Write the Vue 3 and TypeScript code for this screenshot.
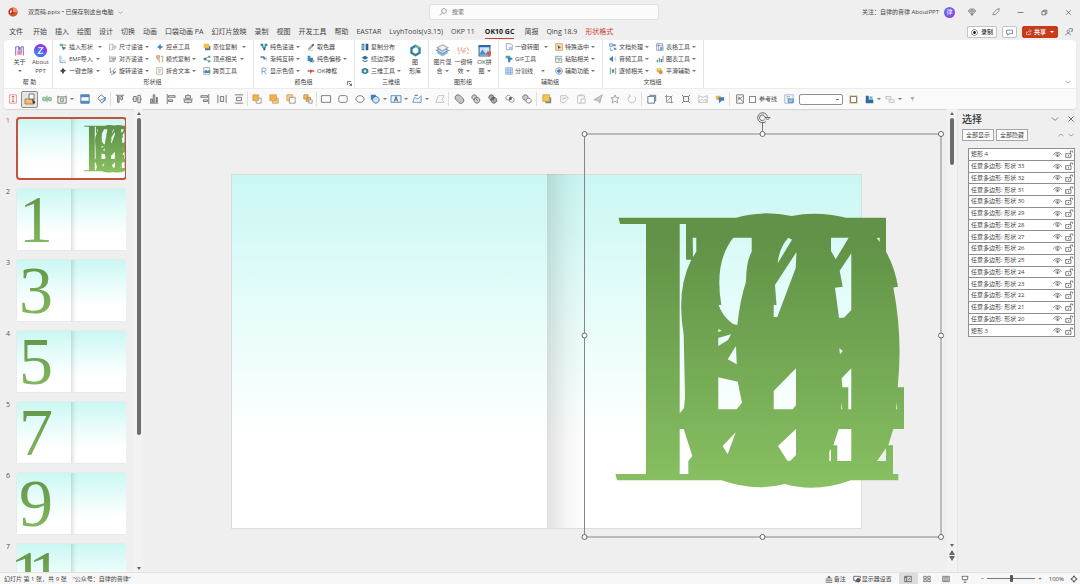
<script setup lang="ts">
import { h, ref } from 'vue'

type Shape = [d: string, fill?: string, stroke?: string]

const K = '#666'
const B = '#3c80ba'
const L = '#a9c8e6'
const O = '#efb04c'
const G = '#b9b9b9'
const D = '#8a8a8a'

const icons: Record<string, Shape[]> = {
  // ribbon, small
  insertShape: [['M1 1h5v4H1z', '#7fb08a'], ['M4 5l7 2-5 4z', B], ['M6 3h5', '', K]],
  emf: [['M1.500 1v10h9', '', B], ['M4 2v6h6', '', L]],
  clean: [['M6 1l2 3 3 1-3 2-2 4-2-4-3-1 3-2z', '#444']],
  size: [['M1 1v10M3 2h3v8H3M8 3l3 3-3 4', '', D], ['M5 5h4v3H5z', L]],
  align: [['M1 1v10M2 3h8v2H2M2 8h6v2H2', '', D], ['M5 5h5v2H5z', '#7a9cc0']],
  rotate: [['M2 1v8l8-7M3 11c4 0 6-2 7-5', '', K], ['M6 6l4 2-3 3z', B]],
  point: [['M6 1l1.500 3.500L11 6 7.500 7.500 6 11 4.500 7.500 1 6l3.500-1.500z', B]],
  style: [['M1 1h4v4H1zM7 2h3v9M2 7h3v4', '', '#9b7b4a'], ['M1 1h4v3H1z', O]],
  split: [['M1 1h9v10H1zM3 4h5M3 6h5M3 8h3', '', '#a59a86']],
  dup: [['M3 4h8v7H3z', '#5c7391'], ['M1 1h8v7H1z', '#f0c24b']],
  vertex: [['M9 2L3 6l6 4', '', K], ['M1 4h4v4H1z', B], ['M8 1h3v3H8zM8 8h3v3H8z', '#3d9a83']],
  cross: [['M1 1h9v10H1z', '#fff', D], ['M2 6l3-2 4 5H2z', B], ['M7 5h4v4H7z', '#53a074']],
  solid: [['M1 1h4v4H1zM7 1h4v4H7z', B], ['M3 5h6v3H3z', '#5aa7a0'], ['M5 7h3v4H5z', '#2c5f93']],
  grad: [['M1 2h5l4 4-4 1-2-3-3 1z', '#5a86b4'], ['M6 8l4-4v6', '', L]],
  rgb: [['M3 11V1.500h4q2 0 2 2.500T7 6.500H3M6 6.500L9.500 11', '', B]],
  picker: [['M2 9l5-6 2 2-6 5z', L, B], ['M7 3l2-2 2 2-2 2z', '#4a4a4a'], ['M1 11h9', '', O]],
  shift: [['M1 1h4v8H1z', '#3d8fa8'], ['M4 4h5v7H4z', B], ['M8 7h3v4H8z', '#7dbb9b']],
  okbox: [['M1 5h10v2H1z', '#d2553c'], ['M5 3l3 3-3 5z', '#c44']],
  distribute: [['M1 1h4v10H1z', '#3d8088'], ['M7 1h4v10H7z', '#2b5d92'], ['M3 3v6', '', '#fff']],
  drift: [['M6 1l5 3-5 3-5-3z', '#2b69a8'], ['M2 7l4 2 4-2v2l-4 2-4-2z', '#4b83ba']],
  cube: [['M6 1l5 2.500v5L6 11 1 8.500v-5z', '#3a7f9c'], ['M6 3.500L8.500 6 6 9 3.500 6z', '#cfe6ee']],
  toImg: [['M2 1h7l2 2v7H2z', '#f6f9fc', '#7790aa'], ['M6 6h5v4H6z', L]],
  gif: [['M1 1h7v4H1z', '#5aa08f'], ['M4 4h7v3H8v4H5z', B]],
  grid: [['M1 1h10v10H1zM1 4.500h10M1 8h10M4.500 1v10M8 1v10', '#e6effa', '#6a9ad2']],
  pick: [['M1 1h10v10H1z', '#f7e2b6', '#b88a3a'], ['M4 3l5 4-3 1-1 2z', '#556']],
  paste: [['M1 2h10M1 5h9M1 2v9h9V5', '', '#5c7c6d'], ['M4 6h4v3H4z', '#9fc5ab']],
  assist: [['M6 1a5 5 0 1 0 .1 0z', '#dde8f5', '#60799a'], ['M5 3h2v6H5zM3 5h6v2H3z', '#4b78ae']],
  doc: [['M1 1h4v4H1zM2 7v4h4', '#e8f0f8', B], ['M6 2h4v3H6zM7 7h4v3H7z', '#6a8fb8']],
  audio: [['M1 4h2l3-3v10L3 8H1z', B], ['M8 4v4M10 2v8', '', L]],
  frame: [['M2 1v10M10 1v10M5 3v6M7 3v6', '', '#466'], ['M5 4h2v4H5z', '#4b83ba']],
  sheet: [['M1 1h9v10H1zM1 4h9M4 1v10', '#fff', '#667d99'], ['M6 6h5v5H6z', '#81aad4']],
  chart: [['M1 7h2v4H1zM4 4h2v7H4z', '#66a58a'], ['M7 6h2v5H7z', B], ['M10 1h1v10h-1z', '#557']],
  morph: [['M1 2h7v6H1z', O], ['M7 5a3 3 0 1 0 .1 0z', '#c9962f'], ['M3 4h3', '', '#fff']],
  // ribbon, large
  about: [['M2.500 2.500h3v7M2.500 2.500v8M7.500 2.500h2v8M7.500 2.500v6', '', '#8a74c0'], ['M4 6h4v4H4z', '#e08ab5'], ['M5 3h2v2H5z', '#5576c7']],
  aboutPpt: [['M6 0a6 6 0 1 0 .1 0z', '#8b3df0'], ['M0 6a6 6 0 0 0 6 6L11 9 5 4z', '#3c7bf2'], ['M4 3.500h4L4 8.500h4.500', '', '#fff']],
  hex: [['M6 .5l4.800 2.700v5.600L6 11.500 1.200 8.800V3.200z', '#2e84a0'], ['M6 .5l4.800 2.700L8 4.500 6 3.500z', '#6fb58f'], ['M6 3l2.600 1.500v3L6 9 3.400 7.500v-3z', '#fff']],
  blend: [['M6 5l5.500 3L6 11.500.500 8z', '#8db9e6'], ['M6 3l5.500 3L6 9 .500 6z', '#c6d9ee', '#7794b5'], ['M6 .700l5 2.800-5 2.800-5-2.800z', '#f2f5f8', '#9aaabc']],
  fx: [['M1 3v3l2 1M4 3v3M6 5l2-1M9 3l2 3M1 8.500h2M5 8h2M9 8.500h2', '', '#e8ad9d'], ['M4 6h4v1H4z', '#e08c78']],
  puzzle: [['M1 2h10v9H1z', '#cfe3f7', '#35689e'], ['M.500 1h11v2H.500z', '#2c67a8'], ['M1 10l3-5 3 4 2-2 2 3z', '#4f8ac6'], ['M8 7h4v3l-2 2z', '#dc5a3e']],
  // quick toolbar
  qText: [['M2 1h8v10H2z', '#fff', '#d88'], ['M4.500 3h3M6 3v6M4.500 9h3', '', '#c55']],
  qSel: [['M1 6h9v5H1z', '#f3bd74', '#a8875b'], ['M5 1h5v5H5z', '#fff', '#678'], ['M8 6l3.500 3.500-2.500 1.500z', '#333']],
  qMid: [['M0 6h12M6 2v8', '', '#5b9c6a'], ['M1 4h4v4H1zM8 4h3v4H8z', '#b7d8bd', '#7bb288']],
  qFit: [['M1 2v9h10V2M1 3.500h10', '', K], ['M4 5h4v4H4z', '#bcd5bf', '#7aa282']],
  qRow: [['M1 1h10v10H1z', '#fff', '#33628f'], ['M1 1h10v3H1zM1 8h10v3H1z', '#4d8abf']],
  qFlip: [['M1 5l4-4 5 4-4 6z', '#fff', K], ['M3 8l8-4M7 10l4-4', '', B]],
  alT: [['M1 1.500h10', '', K], ['M3 3h2v7H3z', G, K], ['M7 3h2v4H7z', '#fff', K]],
  alM: [['M0 6h12', '', K], ['M2 3h3v6H2zM7 1.500h3v9H7z', '#eee', K]],
  alB: [['M1 11h10', '', K], ['M2 6h2v4H2zM5 1h2v9H5zM9 4h1v6H9z', '#ccd', K]],
  alL: [['M1.500 0v12', '', K], ['M3 2h8v2H3zM3 7h5v2H3z', '#eee', K]],
  alC: [['M0 6h12M6 0v12', '', D], ['M3 2h6v3H3zM1.500 7h9v3h-9z', '#eee', K]],
  alR: [['M10.500 0v12', '', K], ['M1 2h8v2H1zM4 7h5v2H4z', '#eee', K]],
  dsH: [['M1 1v10M11 1v10', '', K], ['M4 3h4v6H4z', '#eee', K]],
  dsV: [['M1 1h10M1 11h10', '', K], ['M3 4h6v4H3z', '#eee', K]],
  fwd: [['M5 5h6v6H5z', '#fff', D], ['M1 1h7v7H1z', '#f2b04e', '#d8a253']],
  front: [['M4 5h7v6H4z', '#f7cf8b', '#c5a066'], ['M1 1h8v7H1z', '#f2b04e', '#d8a253']],
  back: [['M1 1h7v7H1z', '#f7cf8b', '#d8a253'], ['M4 4h7v7H4z', '#fff', '#987']],
  bwd: [['M1 1h5v5H1zM4 4h5v5H4z', '#f4bd6b', '#b98a45'], ['M7 7h4v4H7z', '#fff', '#987']],
  rect: [['M.500 2h11v8H.500z', '#fff', K]],
  rrect: [['M3 2h6q2 0 2 2v4q0 2-2 2H3q-2 0-2-2V4q0-2 2-2z', '#fff', K]],
  oval: [['M6 2c3 0 5 2 5 4s-2 4-5 4-5-2-5-4 2-4 5-4z', '#fff', K]],
  shapes: [['M1 1h6v6H1z', '#3d82bf'], ['M7 3a4 4 0 1 0 .1 0z', '#cfe1f2', '#2d6aa5']],
  tbox: [['M0 2h12v8H0z', '#e9f2fb', '#4682bd'], ['M4 9l2-6 2 6M5 7h2', '', '#345']],
  edit: [['M1 10l2-6 4 2 4-4v8z', '#eef5fb', '#5f93c6'], ['M3 1h4v1H3z', K]],
  curve: [['M1 10l3-8h7l-3 5 3 3z', '', G]],
  union: [['M4.500 1A3.500 3.500 0 0 0 3 7.500L6 10.500A3.500 3.500 0 0 0 10.500 5L7.500 2Q6 1 4.500 1z', '#c4c4c4', K]],
  comb: [['M4 1a3 3 0 1 0 .1 0z', '#ccc', K], ['M7 4a3.500 3.500 0 1 0 .1 0z', '#ccc', K], ['M5 5l3 3', '', K]],
  frag: [['M4 1a3 3 0 1 0 .1 0zM7 4a3.500 3.500 0 1 0 .1 0z', '#aaa', '#555'], ['M4 5h4M6 4v4', '', '#555']],
  inter: [['M4 1.500a3 3 0 1 0 .1 0zM8 4a3 3 0 1 0 .1 0z', '', D], ['M5 4h3v3H5z', '#555']],
  subt: [['M4 1a3.200 3.200 0 1 0 .1 0z', '#ccc', K], ['M8 5a3 3 0 1 0 .1 0z', '#fff', K]],
  copy: [['M4 4h7v7H4z', '#6f8f74'], ['M1 1h8v8H1z', '#f0c55a', '#c9a040']],
  brush: [['M2 2h7l2 3-5 6-4-2zM4 5h4M4 7l5-3', '', G]],
  clip: [['M2 2h8v3M2 2v9h4M6 6h5v5H6zM4 1h4', '', G]],
  plane: [['M1 7l10-6-3 10-2-3z', '#ccc', '#aaa']],
  star: [['M6 1l1.500 3.500H11L8.300 6.800 9.500 11 6 8.500 2.500 11l1.200-4.200L1 4.500h3.500z', '', '#999']],
  spin: [['M4 2a4.500 4.500 0 1 0 5 1M2 1l2 1-1 2', '', G]],
  win: [['M1 3h8v8H1z', '#fff', '#567'], ['M3 1h8v8h-2V3H3z', '#7f95ad']],
  crop: [['M3 1v9h8M1 3h8v8M4 8l6-6', '', D]],
  fitp: [['M3 3h6v6H3zM1 1l2 2M11 1L9 3M1 11l2-2M11 11L9 9', '', K]],
  pic: [['M1 2l5 2 5-2v8H1zM1 10l4-4 2 2 2-2 2 4', '', G]],
  flag: [['M1 2h6v5H1z', '#edb64b'], ['M4 4h7v4H8l-3 3z', '#3f7fb9']],
  note: [['M2 1h8v10H2z', '#fff', K], ['M3 8l6-5M4 3l5 6M3 5h3', '', K]],
  ruler: [['M1 1h10v10H1zM3 3h4M3 5h4', '#fff', '#8aaac8'], ['M5 6h6v4H5z', L, B]],
  fill: [['M1 1h10v10H1z', '', '#e4b45c'], ['M2 2h8v8H2z', '#fff', '#555']],
  bars: [['M1 1h4v5h6v5H1z', '#35689a'], ['M6 2h4v3H6z', '#5bb0c9']],
  link: [['M1 3h6v3H1zM5 7h6v3H5z', '', G]],
  pin: [['M4 2h4v3H4zM6 5v4', '#aaa', '#aaa']],
  // chrome
  ppt: [['M6 .500a5.500 5.500 0 1 0 .1 0z', '#d35230'], ['M6 .500a5.500 5.500 0 0 1 5.500 5.500H6z', '#f08f72'], ['M1 3.500h5v5H1z', '#a5311a'], ['M3 7.500v-3h1.300v1.700H3', '', '#fff']],
  search: [['M7.500 1a3.500 3.500 0 1 0 .1 0zM5 7.500L1.500 11', '', K]],
  diamond: [['M3 1.500h6l2.500 3L6 11 .500 4.500zM.500 4.500h11M4 4.500L6 11l2-6.500L6 1.500z', '', K]],
  pen: [['M2 8l5-6 4-1-1 4-5 5H1z', '', K]],
  min: [['M1 6h10', '', '#333']],
  max: [['M1.500 4h6v6h-6zM4 4V2h6v6H8', '', '#333']],
  close: [['M2 2l8 8M10 2l-8 8', '', '#333']],
  rec: [['M6 1a5 5 0 1 0 .1 0z', '', '#333'], ['M6 3.500a2.500 2.500 0 1 0 .1 0z', '#222']],
  comment: [['M1 2h10v6H5l-2 2.500V8H1z', '', '#444']],
  share: [['M1 5v6h8V8M3 8c0-3 2-4 5-4M7 1l4 3-4 3', '', '#fff']],
  person: [['M5 3a2 2 0 1 0 .1 0zM1 11c0-4 7-4 7 0M6 1h5v4H9', '', '#555']],
  down: [['M1 4l5 4 5-4', '', '#555']],
  up: [['M1 8l5-4 5 4', '', '#555']],
  eye: [['M.500 6.500C3 2 9 2 11.500 6.500M6 4.500a2.200 2.200 0 1 0 .1 0z', '', '#666'], ['M6 6a1 1 0 1 0 .1 0z', '#666']],
  lock: [['M1 5.500h8V11H1zM8 5.500V1.500h3.500V4', '', '#444'], ['M4.500 7.500h1v2h-1z', '#444']],
  notes: [['M1 6h10M1 8.500h10M1 11h10', '', '#444'], ['M6 1l3 3H3z', '#444']],
  display: [['M1 2h10v3M1 2v6h4M3 10h3', '', '#333'], ['M8 5a2.800 2.800 0 1 0 .1 0z', '#666', '#333']],
  vNormal: [['M1 2h10v8H1zM1 4h3M4 2v8M6 8l3-4', '', '#444']],
  vSorter: [['M1 2h4v3H1zM7 2h4v3H7zM1 7h4v3H1zM7 7h4v3H7z', '', '#555']],
  vRead: [['M1 2h10v8H1zM6 2v8M2 4h3M7 4h3M2 6h3M7 6h3M2 8h3M7 8h3', '', '#555']],
  vShow: [['M1 2h10M2 2v5h8V2M6 7v3M4 11h4', '', '#444']],
  fitWin: [['M6 .500L8 3H4zM6 11.500L8 9H4zM.500 6L3 4v4zM11.500 6L9 4v4z', '#555'], ['M3.500 3.500h5v5h-5z', '', '#555']],
}

const Ico = (p: { n: string }) =>
  h(
    'svg',
    { viewBox: '0 0 12 12', class: 'ico', 'aria-hidden': 'true' },
    (icons[p.n] ?? []).map(([d, fill, stroke]) => h('path', { d, fill: fill || 'none', stroke: stroke || 'none' })),
  )
Ico.props = ['n']

const tabs = ['文件', '开始', '插入', '绘图', '设计', '切换', '动画', '口袋动画 PA', '幻灯片放映', '录制', '视图', '开发工具', '帮助', 'EASTAR', 'LvyhTools(v3.15)', 'OKP 11', 'OK10 GC', '简报', 'Qing 18.9', '形状格式']

interface Cmd { i: string; t: string; a?: boolean }
interface Group { name: string; cols: { wide?: boolean; items: Cmd[] }[]; bigs: { i: string; l: string[]; a?: boolean }[]; launch?: boolean }

const c = (i: string, t: string, a = true): Cmd => ({ i, t, a })
const groups: Group[] = [
  { name: '帮 助', cols: [], bigs: [{ i: 'about', l: ['关于'], a: true }, { i: 'aboutPpt', l: ['About', 'PPT'] }] },
  {
    name: '形状组', bigs: [], cols: [
      { wide: true, items: [c('insertShape', '插入形状'), c('emf', 'EMF导入'), c('clean', '一键去除')] },
      { items: [c('size', '尺寸递进'), c('align', '对齐递进'), c('rotate', '旋转递进')] },
      { items: [c('point', '控点工具', false), c('style', '模式复制'), c('split', '拆合文本')] },
      { wide: true, items: [c('dup', '原位复制'), c('vertex', '顶点相关'), c('cross', '跨页工具', false)] },
    ],
  },
  {
    name: '颜色组', launch: true, bigs: [], cols: [
      { items: [c('solid', '纯色递进'), c('grad', '渐纯互转'), c('rgb', '显示色值')] },
      { items: [c('picker', '取色器', false), c('shift', '纯色偏移'), c('okbox', 'OK神框', false)] },
    ],
  },
  {
    name: '三维组', cols: [{ items: [c('distribute', '复制分布', false), c('drift', '绕边漂移', false), c('cube', '三维工具')] }],
    bigs: [{ i: 'hex', l: ['图', '形库'] }],
  },
  { name: '图形组', cols: [], bigs: [{ i: 'blend', l: ['图片混', '合'], a: true }, { i: 'fx', l: ['一键特', '效'], a: true }, { i: 'puzzle', l: ['OK拼', '图'], a: true }] },
  {
    name: '辅助组', bigs: [], cols: [
      { wide: true, items: [c('toImg', '一键转图'), c('gif', 'GIF工具', false), c('grid', '分割线')] },
      { items: [c('pick', '特殊选中'), c('paste', '粘贴相关'), c('assist', '辅助功能')] },
    ],
  },
  {
    name: '文档组', bigs: [], cols: [
      { items: [c('doc', '文档处理'), c('audio', '音频工具'), c('frame', '逐帧相关')] },
      { items: [c('sheet', '表格工具'), c('chart', '图表工具'), c('morph', '平滑辅助')] },
    ],
  },
]

// A trailing "+" marks a tool with a drop-down arrow.
const tools: string[][] = [
  ['qText', 'qSel', 'qMid', 'qFit+', 'qRow', 'qFlip'],
  ['alT', 'alM', 'alB', 'alL', 'alC', 'alR', 'dsH', 'dsV'],
  ['fwd', 'front', 'back', 'bwd'],
  ['rect', 'rrect', 'oval', 'shapes+', 'tbox+', 'edit+', 'curve'],
  ['union', 'comb', 'frag', 'inter', 'subt'],
  ['copy', 'brush', 'clip', 'plane', 'star', 'spin'],
  ['win', 'crop', 'fitp', 'pic', 'flag'],
]

const digits = ['', '1', '3', '5', '7', '9', '11']
const current = ref(0)
const zoom = ref(50)
const layers = ['矩形 4', ...Array.from({ length: 14 }, (_, k) => `任意多边形: 形状 ${33 - k}`), '矩形 3']

const art = [
  'M618.500 217.700H736Q762 210 791.700 216Q818 211 846 217.700H886V251.700Q895 268 898 286.700L893.300 287.500Q903 337 897.700 387.300H904V429H893.300L888.300 445.300H893V474H898.300V480.300H851Q816 493 785 484Q754 492 721.700 480.300H617L615.500 474H646V224H620Z',
  'M679.700 224H686V259.700H691.300Q676 290 683.700 335L685 397 684 408 679.700 413.300Z',
  'M692.700 237.700H696.300V251.700L693 257Z',
  'M733.300 237.700H751.700V251.700Q746 262 746 281.700Q740 300 737.300 325L733 324Q722 316 718.700 305H721.300Q714 262 733.300 237.700Z',
  'M788.300 237.700L792 239.700 777.700 263.300Q779 248 788.300 237.700Z',
  'M796.500 252L795.700 268 777.300 317H773.700V305H776.500L775 285Z',
  'M831 237.700H848.700L835.700 259.300 831 251Z',
  'M851.300 253.300V310L844 317.700H839L835 287.700 842.700 286.700 839.700 270.700Z',
  'M876.700 238L879.700 237.700V242Z',
  'M718.300 329L721.700 330.700 718.300 332Z',
  'M718.300 338L731 334.300 728 340 718.300 346Z',
  'M736 346L736.700 364.300 727.700 359.300Z',
  'M718.300 377.300L737.700 381.700 742 402.700 736.700 409.300H718.300Z',
  'M796 368.300V405L792.700 409.300H773.700V391Z',
  'M851.300 368.300V409.300H848.300V387.300H842.300L841.700 378.300Z',
  'M839.300 348.300L842.700 350.700 840 354.300Z',
  'M679.700 429H683.700L692.300 456 688.300 461V474H679.700Z',
  'M735.700 432.300L727.700 454.300 722.700 446Z',
  'M796 429V455L790 461 787.300 460.700 778 446Z',
  'M838.700 429H851.300V461H837.300V445.300H833.300Z',
  'M829.300 451.700L831 449V461H829.300Z',
  'M886 448.300V461H877Z',
  'M897 402V409.300H896Z',
  'M841.300 402L842.300 409.300H841.300Z',
].join('')

const handles = [[584.5, 134], [762.5, 134], [941, 134], [584.5, 335.5], [941, 335.5], [584.5, 537], [762.5, 537], [941, 537]]
</script>

<template>
  <div class="app">
    <header class="titlebar">
      <div class="doc"><Ico n="ppt" class="s10" /><span>双页码.pptx • 已保存到这台电脑</span><Ico n="down" class="s5" /></div>
      <label class="search"><Ico n="search" class="s8" /><input type="text" placeholder="搜索" aria-label="搜索" /></label>
      <div class="window">
        <span>关注：自律的音律 AboutPPT</span>
        <span class="avatar">律</span>
        <button v-for="n in ['diamond', 'pen', 'min', 'max', 'close']" :key="n" class="winbtn" :aria-label="n"><Ico :n="n" :class="n === 'diamond' || n === 'pen' ? 's8' : 's7'" /></button>
      </div>
    </header>

    <div class="tabrow">
      <nav class="tabs">
        <button v-for="t in tabs" :key="t" class="tab" :class="{ active: t === 'OK10 GC', context: t === '形状格式' }">{{ t }}</button>
      </nav>
      <div class="actions">
        <button class="act"><Ico n="rec" class="s7" />录制</button>
        <button class="act" aria-label="批注"><Ico n="comment" class="s7" /></button>
        <button class="act share"><Ico n="share" class="s6" />共享<i class="arrow"></i></button>
        <button class="person" aria-label="协作"><Ico n="person" class="s8" /></button>
      </div>
    </div>

    <section class="card">
      <div class="ribbon">
        <div v-for="g in groups" :key="g.name" class="group">
          <div class="cmds">
            <div v-for="(col, k) in g.cols" :key="k" class="col" :class="{ wide: col.wide }">
              <button v-for="it in col.items" :key="it.t" class="cmd">
                <Ico :n="it.i" class="s8" /><span class="cmdtext">{{ it.t }}</span><i v-if="it.a" class="arrow"></i>
              </button>
            </div>
            <button v-for="b in g.bigs" :key="b.i" class="big">
              <Ico :n="b.i" class="s13" />
              <span v-for="(l, k) in b.l" :key="l" class="bigline">{{ l }}<i v-if="b.a && k === 1" class="arrow"></i></span>
              <span v-if="b.a && b.l.length === 1" class="bigline"><i class="arrow"></i></span>
            </button>
          </div>
          <div class="gname">{{ g.name }}<svg v-if="g.launch" class="launch" viewBox="0 0 6 6"><path d="M.500 5V.500H5M2.500 2.500l3 3M5.500 3v2.500H3" fill="none" stroke="#555" /></svg></div>
        </div>
        <button class="collapse" aria-label="折叠功能区"><Ico n="down" class="s6" /></button>
      </div>

      <div class="quick">
        <div v-for="(set, k) in tools" :key="k" class="set">
          <button v-for="t in set" :key="t" class="tool" :class="{ on: t === 'qSel', drop: t.endsWith('+') }" :aria-label="t">
            <Ico :n="t.replace('+', '')" :class="t === 'qSel' ? 's12' : 's10'" /><i v-if="t.endsWith('+')" class="arrow"></i>
          </button>
        </div>
        <div class="set tail">
          <button class="tool" aria-label="注释"><Ico n="note" class="s10" /></button>
          <label class="check"><input type="checkbox" />参考线</label>
          <button class="tool" aria-label="标尺"><Ico n="ruler" class="s10" /></button>
          <select class="combo" aria-label="字号"><option></option></select>
          <button class="tool" aria-label="填充"><Ico n="fill" class="s9" /></button>
          <button class="tool drop" aria-label="图表"><Ico n="bars" class="s9" /><i class="arrow"></i></button>
          <button class="tool drop" aria-label="链接"><Ico n="link" class="s10" /><i class="arrow"></i></button>
          <button class="tool" aria-label="固定"><Ico n="pin" class="s7" /></button>
        </div>
      </div>
    </section>

    <main class="work">
      <ol class="thumbs">
        <li v-for="(d, k) in digits" :key="k" class="slide" :class="{ sel: current === k }">
          <span class="num">{{ k + 1 }}</span>
          <button class="thumb" :aria-label="`幻灯片 ${k + 1}`" @click="current = k">
            <svg viewBox="0 0 109 61" :class="{ open: d }">
              <rect width="109" height="61" fill="url(#sky)" />
              <rect x="54" width="6" height="61" fill="url(#spine)" />
              <path v-if="k === 0" :d="art" transform="translate(-40 -30) scale(.1733)" fill="url(#leaf)" fill-rule="evenodd" />
              <text v-else-if="d === '11'" x="-7 11" y="53" class="digit">11</text>
              <text v-else x="2" y="53" class="digit">{{ d }}</text>
            </svg>
          </button>
        </li>
      </ol>
      <div class="scroll left"><i class="tri"></i><i class="track"><i class="knob long"></i></i><i class="tri dn"></i></div>

      <div class="stage">
        <svg viewBox="143 109 804 463" class="canvas">
          <defs>
            <linearGradient id="sky" x1="0" y1="0" x2="0" y2="1"><stop offset="0" stop-color="#caf7f2" /><stop offset=".35" stop-color="#e4fcfa" /><stop offset=".75" stop-color="#fff" /></linearGradient>
            <linearGradient id="spine"><stop offset="0" stop-color="#333" stop-opacity=".15" /><stop offset=".5" stop-color="#333" stop-opacity=".05" /><stop offset="1" stop-color="#333" stop-opacity="0" /></linearGradient>
            <linearGradient id="leaf" x1="0" y1="0" x2="0" y2="1"><stop offset=".1" stop-color="#619247" /><stop offset="1" stop-color="#88c062" /></linearGradient>
          </defs>
          <rect x="231.500" y="174.500" width="630" height="354" fill="url(#sky)" stroke="#d5dfde" />
          <rect x="547" y="174" width="38" height="354" fill="url(#spine)" />
          <path :d="art" fill="url(#leaf)" fill-rule="evenodd" />
          <rect x="584.500" y="134" width="356.500" height="403" fill="none" stroke="#868686" />
          <path d="M762.500 131v-9" stroke="#777" />
          <circle v-for="([x, y], k) in handles" :key="k" :cx="x" :cy="y" r="2.500" fill="#fff" stroke="#666" />
          <path d="M766 121.500a5 5 0 1 1 1.500-5M765 117.500h5l-2.500 2.500zM764.500 119.500a2.800 2.800 0 1 1 .5-2.500" fill="none" stroke="#666" />
        </svg>
      </div>
      <div class="scroll right"><i class="tri"></i><i class="track"><i class="knob short"></i></i><i class="tri dn"></i><i class="tri step"></i><i class="tri step dn"></i></div>

      <aside class="pane">
        <div class="panehead"><h2>选择</h2><button aria-label="选项"><Ico n="down" class="s8" /></button><button aria-label="关闭"><Ico n="close" class="s8" /></button></div>
        <div class="panebar"><button class="box">全部显示</button><button class="box">全部隐藏</button><span class="grow"></span><button aria-label="上移"><Ico n="up" class="s6" /></button><button aria-label="下移"><Ico n="down" class="s6" /></button></div>
        <ul class="layers">
          <li v-for="l in layers" :key="l"><span class="grow">{{ l }}</span><button aria-label="可见"><Ico n="eye" class="s9" /></button><button aria-label="锁定"><Ico n="lock" class="s8" /></button></li>
        </ul>
      </aside>
    </main>

    <footer class="status">
      <span>幻灯片 第 1 张，共 9 张</span><span>“公众号：自律的音律”</span><span class="grow"></span>
      <button class="st"><Ico n="notes" class="s8" />备注</button>
      <button class="st"><Ico n="display" class="s8" />显示器设置</button>
      <div class="views"><button v-for="n in ['vNormal', 'vSorter', 'vRead', 'vShow']" :key="n" :class="{ on: n === 'vNormal' }" :aria-label="n"><Ico :n="n" class="s8" /></button></div>
      <div class="zoomer"><button aria-label="缩小">−</button><input v-model="zoom" type="range" min="0" max="100" aria-label="缩放" /><button aria-label="放大">+</button></div>
      <span>100%</span>
      <button aria-label="适应窗口"><Ico n="fitWin" class="s8" /></button>
    </footer>
  </div>
</template>

<style>
body { margin: 0; background: #efefef; }
</style>

<style scoped>
.app { height: 100vh; display: flex; flex-direction: column; overflow: hidden; background: #efefef; color: #444; font: 6px/8px "Open Sans", "Noto Sans CJK SC", sans-serif; }
button, input, select { font: inherit; color: inherit; margin: 0; padding: 0; border: 0; background: none; }
button { display: flex; align-items: center; justify-content: center; white-space: nowrap; }
.grow { flex: 1; }
.ico { display: block; flex: none; overflow: visible; }
.s5 { width: 5px; height: 5px; }
.s6 { width: 6px; height: 6px; }
.s7 { width: 7px; height: 7px; }
.s8 { width: 8px; height: 8px; }
.s9 { width: 9px; height: 9px; }
.s10 { width: 10px; height: 10px; }
.s12 { width: 12px; height: 12px; }
.s13 { width: 13px; height: 13px; }
.arrow { flex: none; width: 0; height: 0; border: 2px solid transparent; border-top-color: #777; border-bottom: 0; }

.titlebar { flex: none; height: 24px; display: grid; grid-template-columns: 1fr 230px 1fr; align-items: center; padding-left: 8px; }
.doc { display: flex; align-items: center; gap: 4px; }
.doc span { margin-left: 6px; }
.search { height: 16px; display: flex; align-items: center; gap: 5px; padding-left: 9px; background: #fbfbfb; border: 1px solid #e0e0e0; border-radius: 2px; box-sizing: border-box; }
.search input { flex: 1; min-width: 0; outline: 0; }
.search input::placeholder { color: #666; opacity: 1; }
.window { display: flex; align-items: center; justify-content: flex-end; }
.avatar { width: 11px; height: 11px; margin: 0 5px; border-radius: 50%; background: linear-gradient(135deg, #4b7cf3, #a234ee); color: #fff; text-align: center; line-height: 11px; }
.winbtn { width: 24px; height: 20px; }

.tabrow { flex: none; height: 16px; display: flex; justify-content: space-between; align-items: center; padding: 0 7px 0 9px; }
.tabs { display: flex; gap: 8px; font-size: 7px; }
.tab { height: 14px; border-bottom: 1px solid transparent; border-top: 1px solid transparent; box-sizing: border-box; }
.tab:first-child { margin-right: 2px; }
.tab.active { margin: 0 2px; font-weight: 700; color: #222; border-bottom-color: #c8442c; }
.tab.context { color: #c8442c; }
.actions { display: flex; gap: 5px; align-items: center; }
.act { height: 12px; padding: 0 3px; gap: 3px; background: #fff; border: 1px solid #c2c2c2; border-radius: 2px; box-sizing: border-box; color: #222; font-weight: 500; }
.share { gap: 2px; background: #c53b1b; border-color: #c53b1b; color: #fff; font-weight: 700; }
.share .arrow { border-top-color: #fff; margin-left: 2px; }
.person { margin-left: 2px; }

.card { flex: none; margin: 0 4px; background: #fff; border-radius: 4px; box-shadow: 0 1px 1px #d4d4d4; overflow: hidden; }
.ribbon { display: flex; height: 48px; }
.group { display: flex; flex-direction: column; padding: 1px 7px 0 6px; border-right: 1px solid #e4e4e4; box-sizing: border-box; }
.group:first-child { padding: 1px 5px 0 8px; }
.cmds { display: flex; gap: 7px; flex: 1; }
.cmds:has(.big + .big) { gap: 0; margin: 0 -4px 0 -3px; }
.cmds:has(.col + .big) { gap: 5px; margin-right: -3px; }
.col { width: 40px; display: flex; flex-direction: column; }
.col.wide { width: 43px; }
.cmd { height: 12px; gap: 2px; justify-content: flex-start; }
.cmd .arrow { margin-left: 1px; }
.col.wide .cmd:first-child .arrow { margin-left: 4px; }
.cmdtext { min-width: 23px; text-align: left; }
.big { width: 21px; flex-direction: column; justify-content: flex-start; padding-top: 3px; gap: 1px; }
.col + .big { width: 18px; }
.bigline { display: flex; align-items: center; gap: 2px; height: 8px; }
.gname { height: 10px; line-height: 9px; text-align: center; position: relative; }
.launch { position: absolute; right: -5px; top: 3px; width: 5px; height: 5px; }
.collapse { margin-left: auto; align-self: flex-end; padding: 0 5px 3px 0; }

.quick { display: flex; align-items: center; height: 21px; background: #fafafa; border-top: 1px solid #ececec; box-sizing: border-box; }
.set { display: flex; align-items: center; border-right: 1px solid #dedede; height: 14px; }
.set:nth-child(n + 5) { padding: 0 1px; }
.set.tail { border: 0; }
.tool { width: 17px; height: 17px; }
.tool.drop { width: 21px; gap: 3px; }
.tool.on { background: #e4e4e4; border: 1px solid #8d8d8d; border-radius: 2px; box-sizing: border-box; }
.check { display: flex; align-items: center; gap: 3px; margin: 0 3px 0 1px; }
.check input { appearance: none; width: 7px; height: 7px; border: 1px solid #888; background: #fff; box-sizing: border-box; }
.combo { width: 44px; height: 11px; margin: 0 2px; background: #fff linear-gradient(#777, #777) no-repeat right 3px center / 3px 1px; border: 1px solid #8f8f8f; border-radius: 2px; appearance: none; box-sizing: border-box; }

.work { flex: 1; min-height: 0; display: flex; }
.thumbs { margin: 0; padding: 9px 0 0 6px; list-style: none; display: flex; flex-direction: column; gap: 10px; width: 120px; overflow: hidden; }
.slide { flex: none; display: flex; }
.num { width: 11px; font-size: 7px; line-height: 6px; color: #555; }
.sel .num { color: #d0553f; }
.thumb { width: 109px; border-radius: 2px; box-shadow: 0 0 1px #bbb; }
.thumb svg { display: block; width: 100%; border-radius: 2px; }
.thumb .open { overflow: visible; }
.sel .thumb { outline: 2px solid #c4523d; outline-offset: -1px; border-radius: 3px; }
.digit { font: 68px "Liberation Serif", serif; fill: url(#leaf); }

.scroll { flex: none; width: 10px; display: flex; flex-direction: column; align-items: center; gap: 3px; padding: 3px 0 2px; background: #f2f2f2; }
.left { width: 9px; margin-left: 8px; }
.right { padding-bottom: 11px; }
.track { flex: 1; display: block; width: 4px; }
.knob { display: block; width: 4px; border-radius: 2px; background: #6c6c6c; }
.long { height: 71%; }
.short { height: 11%; }
.tri { width: 0; height: 0; border: 2px solid transparent; border-bottom: 3px solid #666; border-top: 0; }
.tri.dn { border-top: 3px solid #666; border-bottom: 0; }
.tri.step { border-width: 3px; border-top-width: 0; border-bottom-width: 5px; }
.tri.step.dn { border-top-width: 5px; border-bottom-width: 0; margin-top: -2px; }

.stage { flex: 1; min-width: 0; }
.canvas { display: block; width: 100%; height: 100%; }

.pane { flex: none; width: 113px; padding: 3px 5px 0 4px; border-left: 1px solid #e6e6e6; }
.panehead { display: flex; align-items: center; gap: 8px; height: 14px; }
.panehead h2 { flex: 1; margin: 0; font-size: 10px; line-height: 14px; font-weight: 500; color: #333; }
.panebar { display: flex; gap: 2px; align-items: center; margin-top: 3px; }
.panebar button { padding: 0 1px; }
.panebar .box { width: 32px; height: 12px; padding: 0; background: #fdfdfd; border: 1px solid #a5a5a5; box-sizing: border-box; }
.layers { list-style: none; margin: 7px 0 0 6px; padding: 0; height: 189px; display: grid; grid-auto-rows: 1fr; border-top: 1px solid #8e8e8e; box-sizing: border-box; }
.layers li { min-height: 0; display: flex; align-items: center; gap: 3px; padding: 0 1px 0 2px; background: #fff; border: solid #8e8e8e; border-width: 0 1px 1px; box-sizing: border-box; }

.status { flex: none; height: 12px; display: flex; align-items: center; gap: 6px; padding: 0 2px 0 4px; background: #f7f7f7; border-top: 1px solid #e2e2e2; box-sizing: border-box; }
.st { gap: 1px; margin-right: 1px; }
.views { display: flex; }
.views button { width: 19px; height: 11px; }
.views .on { background: #dcdcdc; }
.zoomer { display: flex; align-items: center; gap: 3px; margin-right: 1px; }
.zoomer input { appearance: none; width: 48px; height: 7px; background: linear-gradient(#777, #777) no-repeat center / 100% 1px; }
.zoomer input::-webkit-slider-thumb { appearance: none; width: 3px; height: 7px; background: #555; border-radius: 1px; }
</style>
